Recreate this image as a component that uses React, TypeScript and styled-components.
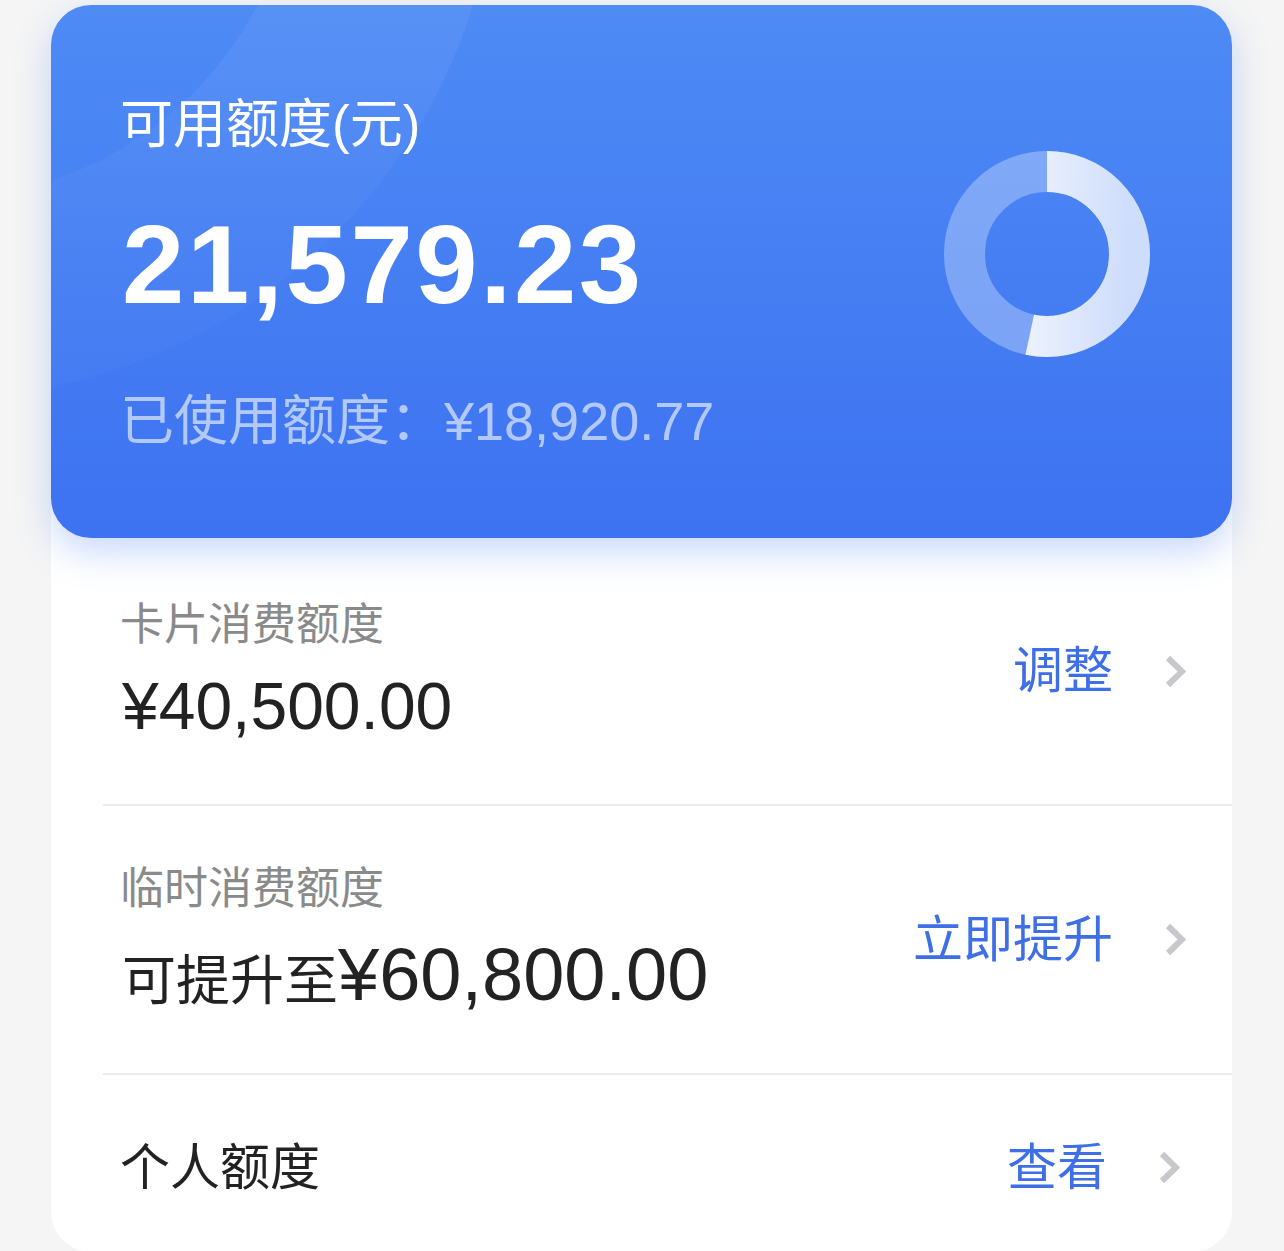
import React from "react";
import styled, { createGlobalStyle } from "styled-components";

const GlobalStyle = createGlobalStyle`
  html, body { margin: 0; padding: 0; }
  body {
    background: #f5f5f5;
    font-family: "Liberation Sans", "Noto Sans CJK SC", sans-serif;
  }
`;

const Page = styled.div`
  width: 1284px;
  box-sizing: border-box;
  padding: 5px 52px 0 51px;
  display: flex;
  flex-direction: column;
`;

const Card = styled.section`
  position: relative;
  z-index: 1;
  height: 533px;
  border-radius: 40px;
  overflow: hidden;
  display: flex;
  background: linear-gradient(180deg, #4e8bf5 0%, #3d72f1 100%);
  box-shadow: 0 14px 36px rgba(61, 114, 241, 0.28);
`;

const Deco = styled.svg`
  position: absolute;
  left: 0;
  top: 0;
  pointer-events: none;
`;

const Info = styled.div`
  position: relative;
  display: flex;
  flex-direction: column;
  padding: 88px 0 0 69px;
  color: #fff;
`;

const Title = styled.div`
  font-size: 53px;
  line-height: 1.2;
`;

const Amount = styled.div`
  margin-top: 52px;
  font-size: 112px;
  font-weight: 700;
  line-height: 1;
  letter-spacing: 2.6px;
  padding-left: 2px;
`;

const Used = styled.div`
  margin-top: 68px;
  font-size: 54px;
  line-height: 1.2;
  color: rgba(255, 255, 255, 0.6);
`;

const DonutWrap = styled.div`
  position: relative;
  margin: 146px 82px 0 auto;
  width: 206px;
  height: 206px;
`;

const Panel = styled.section`
  margin-top: -40px;
  padding-top: 40px;
  background: #fff;
  border-radius: 0 0 40px 40px;
  display: flex;
  flex-direction: column;
`;

const Row = styled.div<{ $h: number; $pr: number; $pt?: number; $line?: boolean }>`
  box-sizing: border-box;
  display: flex;
  align-items: center;
  height: ${(p) => p.$h}px;
  margin-left: 52px;
  padding: ${(p) => p.$pt ?? 0}px ${(p) => p.$pr}px 0 17px;
  border-bottom: ${(p) => (p.$line ? "2px solid #ebebeb" : "none")};
`;

const Texts = styled.div`
  display: flex;
  flex-direction: column;
  gap: 14px;
`;

const Label = styled.div`
  font-size: 44px;
  line-height: 1.3;
  color: #8a8a8a;
`;

const Value = styled.div`
  font-size: 66px;
  line-height: 1.2;
  color: #222;
  padding-left: 2px;
`;

const ValueCn = styled.span`
  font-size: 54px;
`;

const ValueNum = styled.span`
  font-size: 74px;
`;

const Name = styled.div`
  font-size: 50px;
  line-height: 1.2;
  color: #222;
`;

const Action = styled.div`
  margin-left: auto;
  display: flex;
  align-items: center;
  gap: 52px;
  font-size: 50px;
  line-height: 1.2;
  color: #3e6fe6;
`;

const Chevron = () => (
  <svg width="21" height="33" viewBox="0 0 21 33">
    <polyline
      points="3,3 17,16.5 3,30"
      fill="none"
      stroke="#c8c8cc"
      strokeWidth="6"
      strokeLinecap="butt"
      strokeLinejoin="miter"
    />
  </svg>
);

const Donut: React.FC<{ ratio: number }> = ({ ratio }) => {
  const r = 82.5;
  const c = 2 * Math.PI * r;
  return (
    <svg width="206" height="206" viewBox="0 0 206 206">
      <defs>
        <linearGradient id="arcGrad" x1="0" y1="0" x2="0" y2="1">
          <stop offset="0%" stopColor="#ffffff" stopOpacity="1" />
          <stop offset="100%" stopColor="#ffffff" stopOpacity="0.62" />
        </linearGradient>
      </defs>
      <circle cx="103" cy="103" r={r} fill="none" stroke="rgba(255,255,255,0.3)" strokeWidth="41" />
      <circle
        cx="103"
        cy="103"
        r={r}
        fill="none"
        stroke="url(#arcGrad)"
        strokeWidth="41"
        strokeDasharray={`${c * ratio} ${c}`}
        transform="rotate(-90 103 103)"
      />
    </svg>
  );
};

export default function App() {
  const total = 40500;
  const available = 21579.23;
  return (
    <>
      <GlobalStyle />
      <Page>
        <Card>
          <Deco width="1181" height="533" viewBox="0 0 1181 533">
            <defs>
              <linearGradient id="decoGrad" x1="0" y1="0" x2="0" y2="1">
                <stop offset="0%" stopColor="#ffffff" stopOpacity="0.14" />
                <stop offset="100%" stopColor="#ffffff" stopOpacity="0.02" />
              </linearGradient>
            </defs>
            <circle cx="-111" cy="-165" r="458" fill="none" stroke="url(#decoGrad)" strokeWidth="200" />
          </Deco>
          <Info>
            <Title>可用额度(元)</Title>
            <Amount>21,579.23</Amount>
            <Used>已使用额度：¥18,920.77</Used>
          </Info>
          <DonutWrap>
            <Donut ratio={available / total} />
          </DonutWrap>
        </Card>
        <Panel>
          <Row $h={268} $pr={46} $line>
            <Texts>
              <Label>卡片消费额度</Label>
              <Value>¥40,500.00</Value>
            </Texts>
            <Action>
              <span>调整</span>
              <Chevron />
            </Action>
          </Row>
          <Row $h={269} $pr={46} $line>
            <Texts>
              <Label>临时消费额度</Label>
              <Value>
                <ValueCn>可提升至</ValueCn>
                <ValueNum>¥60,800.00</ValueNum>
              </Value>
            </Texts>
            <Action>
              <span>立即提升</span>
              <Chevron />
            </Action>
          </Row>
          <Row $h={177} $pr={52} $pt={8}>
            <Name>个人额度</Name>
            <Action>
              <span>查看</span>
              <Chevron />
            </Action>
          </Row>
        </Panel>
      </Page>
    </>
  );
}
